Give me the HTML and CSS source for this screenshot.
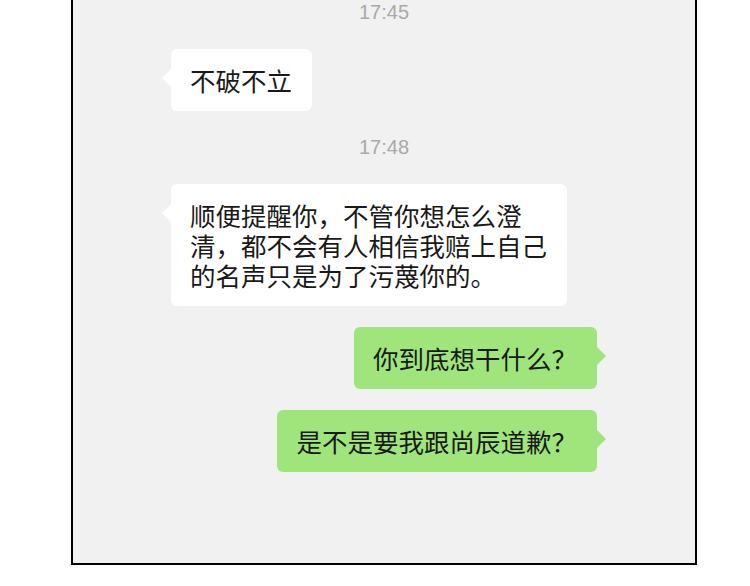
FILE: index.html
```html
<!DOCTYPE html>
<html lang="zh-CN">

<head>
  <meta charset="UTF-8">
  <meta name="viewport" content="width=device-width, initial-scale=1.0">
  <title>聊天记录</title>
  <link rel="stylesheet" href="styles.css">
</head>

<body>
  <div class="panel">
    <div class="chat">
      <div class="time">17:45</div>
      <div class="row in">
        <div class="bubble">不破不立</div>
      </div>

      <div class="time">17:48</div>
      <div class="row in">
        <div class="bubble">顺便提醒你，不管你想怎么澄<br>清，都不会有人相信我赔上自己<br>的名声只是为了污蔑你的。</div>
      </div>

      <div class="row out">
        <div class="bubble">你到底想干什么？</div>
      </div>
      <div class="row out">
        <div class="bubble">是不是要我跟尚辰道歉？</div>
      </div>
    </div>
  </div>
</body>

</html>
```

FILE: styles.css
```css
body {
  margin: 0;
  padding: 0;
  background-color: #fff;
  font-family: "Noto Sans CJK SC", "Noto Sans", sans-serif;
}

.panel {
  box-sizing: border-box;
  width: 626px;
  height: 565px;
  margin-left: 71px;
  background-color: #f1f1f1;
  border: 2px solid #000;
  border-top: none;
}

.chat {
  display: flex;
  flex-direction: column;
  gap: 21px;
  padding: 0 98px;
}

.time {
  font-family: "Liberation Sans", Arial, sans-serif;
  font-size: 20px;
  line-height: 24px;
  color: #a9a9a9;
  text-align: center;
  margin-bottom: 4px;
}

.row + .time {
  margin-top: 3px;
}

.row {
  display: flex;
}

.row.in {
  justify-content: flex-start;
}

.row.out {
  justify-content: flex-end;
}

.bubble {
  position: relative;
  padding: 16px 20px 16px 19px;
  font-size: 25.5px;
  line-height: 30px;
  color: #191919;
  background-color: #fff;
  border-radius: 6px;
}

.row.out .bubble {
  background-color: #a0e57b;
}

/* little arrow on the side of each bubble */
.bubble::before {
  content: "";
  position: absolute;
  top: 20px;
  width: 0;
  height: 0;
  border-top: 9px solid transparent;
  border-bottom: 9px solid transparent;
}

.row.in .bubble::before {
  left: -9px;
  border-right: 9px solid #fff;
}

.row.out .bubble::before {
  right: -9px;
  border-left: 9px solid #a0e57b;
}
```
